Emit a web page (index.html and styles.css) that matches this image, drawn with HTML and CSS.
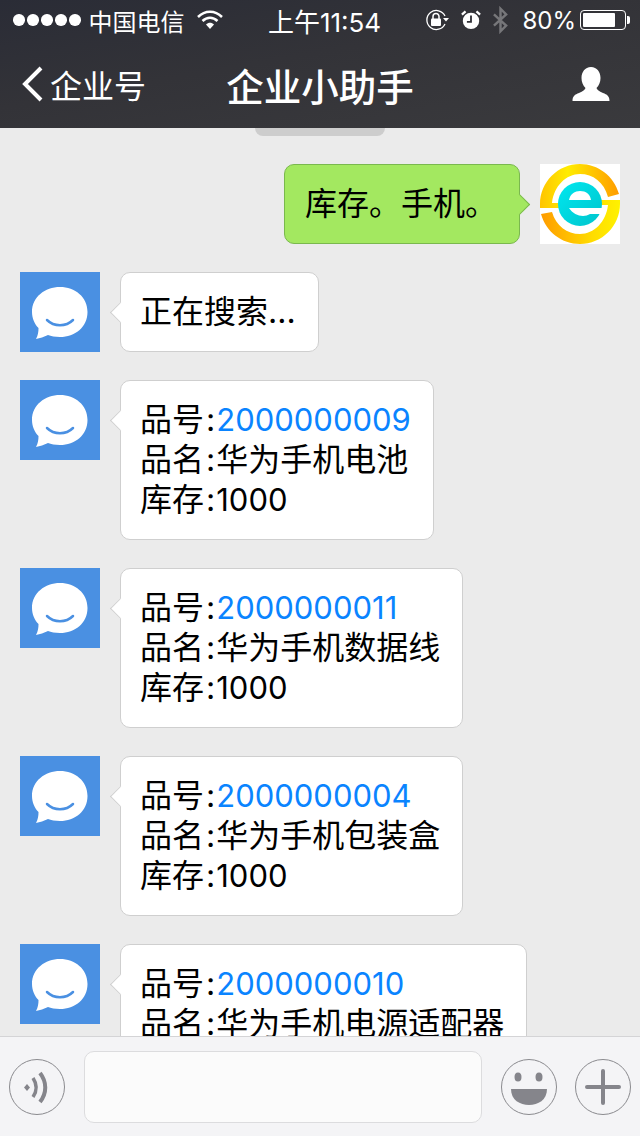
FILE: index.html
```html
<!DOCTYPE html>
<html lang="zh-CN">
<head>
<meta charset="utf-8">
<title>企业小助手</title>
<link rel="stylesheet" href="styles.css">
</head>
<body>
<svg class="defs" aria-hidden="true">
  <symbol id="bot" viewBox="0 0 80 80">
    <rect width="80" height="80" fill="#4a90e2"/>
    <path d="M40 15C55 15 67.500 25 67.500 40C67.500 55 55 65 40 65C35 65 31 64 28 63C24 65 20 66 16 67C18 63 18.500 60 18.500 56C14.500 52 12 46 12 40C12 25 25 15 40 15Z" fill="#fff"/>
    <path d="M27 48C34 55 46 55 53 48" fill="none" stroke="#4a90e2" stroke-width="2.500" stroke-linecap="round"/>
  </symbol>
</svg>
<div class="screen">
  <header class="top">
    <div class="status">
      <div class="status-side">
        <span class="dots"><i></i><i></i><i></i><i></i><i></i></span>
        <span class="carrier">中国电信</span>
        <svg class="wifi" width="26" height="20" viewBox="0 0 26 20"><path d="M1 7C8 0 18 0 25 7" fill="none" stroke="#fff" stroke-width="2.500"/><path d="M5.500 11C10 6.500 16 6.500 20.500 11" fill="none" stroke="#fff" stroke-width="2.500"/><path d="M9 14.500C11.500 12 14.500 12 17 14.500L13 19Z" fill="#fff"/></svg>
      </div>
      <div class="clock">上午11:54</div>
      <div class="status-side status-right">
        <svg class="ico" width="24" height="22" viewBox="0 0 24 22"><path d="M20 7A9.500 9.500 0 1 0 20 15" fill="none" stroke="#fff" stroke-width="1.300"/><path d="M18 9H24L21 12.500Z" fill="#fff"/><rect x="6" y="9.500" width="10" height="7.500" rx="1" fill="#fff"/><path d="M8 10V7.500A3 3 0 0 1 14 7.500V10" fill="none" stroke="#fff" stroke-width="1.500"/></svg>
        <svg class="ico" width="20" height="22" viewBox="0 0 22 22"><circle cx="11" cy="12" r="9" fill="#fff"/><path d="M11 6V13H6.500" fill="none" stroke="#303036" stroke-width="2"/><path d="M1 5L5 1.500M21 5L17 1.500" stroke="#fff" stroke-width="2.500"/></svg>
        <svg class="ico ico-bt" width="15" height="28" viewBox="0 0 16 28"><path d="M1 8L14 20L8 26V2L14 8L1 20" fill="none" stroke="#77777a" stroke-width="2.600"/></svg>
        <span class="percent">80%</span>
        <span class="battery"><span class="battery-level"></span></span>
      </div>
    </div>
    <nav class="nav">
      <div class="nav-back">
        <svg width="24" height="36" viewBox="0 0 24 36"><path d="M21 2L5 18L21 34" fill="none" stroke="#fff" stroke-width="4"/></svg>
        <span>企业号</span>
      </div>
      <div class="nav-title">企业小助手</div>
      <div class="nav-user">
        <svg width="38" height="36" viewBox="0 0 38 36"><path d="M19 1C25 1 28.500 6 28.500 12C28.500 16 27 19.500 24.500 22C25 24 27 25 31 27C35 28.500 37.500 30 37.500 35H0.500C0.500 30 3 28.500 7 27C11 25 13 24 13.500 22C11 19.500 9.500 16 9.500 12C9.500 6 13 1 19 1Z" fill="#fff"/></svg>
      </div>
    </nav>
  </header>

  <main class="chat">
    <div class="pull"></div>
    <div class="msg msg-out">
      <div class="bubble bubble-out">库存。手机。</div>
      <svg class="avatar" viewBox="0 0 80 80">
        <defs>
          <linearGradient id="g1" x1="0" y1="0" x2="1" y2="0"><stop offset="0" stop-color="#ffc400"/><stop offset="0.350" stop-color="#ffec00"/><stop offset="1" stop-color="#ff9c00"/></linearGradient>
          <linearGradient id="g2" x1="0" y1="0" x2="1" y2="0"><stop offset="0" stop-color="#ff9c00"/><stop offset="0.650" stop-color="#ffdc00"/><stop offset="1" stop-color="#fff200"/></linearGradient>
          <linearGradient id="g3" x1="0" y1="0" x2="1" y2="1"><stop offset="0" stop-color="#00e8f0"/><stop offset="1" stop-color="#00c4cc"/></linearGradient>
        </defs>
        <rect width="80" height="80" fill="#fff"/>
        <path d="M0 44H20V39H12C14 22 26 10 40 10C53 10 64 18 68 33L79 30C74 12 58 0 40 0C18 0 0 18 0 40Z" fill="url(#g1)"/>
        <path d="M80 36H60V41H68C66 58 54 70 40 70C27 70 16 62 12 48L1 50C6 68 22 80 40 80C62 80 80 62 80 40Z" fill="url(#g2)"/>
        <circle cx="40" cy="40" r="22" fill="url(#g3)"/>
        <path d="M29 36C30 30 35 27 40 27C46 27 50 30 51 36Z" fill="#fff"/>
        <path d="M29 44H64V50H50C44 54 34 52 29 44Z" fill="#fff"/>
      </svg>
    </div>

    <div class="msg">
      <svg class="avatar"><use href="#bot"/></svg>
      <div class="bubble">正在搜索...</div>
    </div>

    <div class="msg">
      <svg class="avatar"><use href="#bot"/></svg>
      <div class="bubble">品号<span class="sep">:</span><a class="num code">2000000009</a><br>品名<span class="sep">:</span>华为手机电池<br>库存<span class="sep">:</span><span class="num">1000</span></div>
    </div>

    <div class="msg">
      <svg class="avatar"><use href="#bot"/></svg>
      <div class="bubble">品号<span class="sep">:</span><a class="num code">2000000011</a><br>品名<span class="sep">:</span>华为手机数据线<br>库存<span class="sep">:</span><span class="num">1000</span></div>
    </div>

    <div class="msg">
      <svg class="avatar"><use href="#bot"/></svg>
      <div class="bubble">品号<span class="sep">:</span><a class="num code">2000000004</a><br>品名<span class="sep">:</span>华为手机包装盒<br>库存<span class="sep">:</span><span class="num">1000</span></div>
    </div>

    <div class="msg">
      <svg class="avatar"><use href="#bot"/></svg>
      <div class="bubble">品号<span class="sep">:</span><a class="num code">2000000010</a><br>品名<span class="sep">:</span>华为手机电源适配器<br>库存<span class="sep">:</span><span class="num">1000</span></div>
    </div>
  </main>

  <footer class="bar">
    <svg class="round" viewBox="0 0 56 56"><circle cx="28" cy="28" r="27.500" fill="none" stroke="#8a8a8e"/><path d="M18 25L21 28.500L18 32L15 28.500Z" fill="#85858b"/><path d="M24 19C28 25 28 32 24 38" fill="none" stroke="#85858b" stroke-width="3.500"/><path d="M31 14C38 23 38 34 31 43" fill="none" stroke="#85858b" stroke-width="4"/></svg>
    <div class="field"></div>
    <svg class="round" viewBox="0 0 56 56"><circle cx="28" cy="28" r="27.500" fill="none" stroke="#8a8a8e"/><ellipse cx="17" cy="18" rx="3.500" ry="4.500" fill="#85858b"/><ellipse cx="38" cy="18" rx="3.500" ry="4.500" fill="#85858b"/><path d="M10 30H46C46 41 37 46 28 46C19 46 10 41 10 30Z" fill="#85858b"/></svg>
    <svg class="round" viewBox="0 0 56 56"><circle cx="28" cy="28" r="27.500" fill="none" stroke="#8a8a8e"/><path d="M28 12V44M12 28H44" stroke="#85858b" stroke-width="4" stroke-linecap="round"/></svg>
  </footer>
</div>
</body>
</html>
```
FILE: styles.css
```css
* { box-sizing: border-box; }
html, body { margin: 0; padding: 0; }
body {
  font-family: Inter, "Noto Sans CJK SC", "Noto Sans", sans-serif;
  color: #000;
  background: #ebebeb;
}
.defs { width: 0; height: 0; display: block; overflow: hidden; }
.screen {
  width: 640px;
  height: 1136px;
  display: flex;
  flex-direction: column;
  overflow: hidden;
}
.top {
  flex: none;
  height: 128px;
  color: #fff;
  background: linear-gradient(170deg, #2a2c36 0%, #333338 45%, #3a3a3d 100%);
}
.status {
  height: 40px;
  padding: 0 14px 0 13px;
  display: flex;
  align-items: center;
  justify-content: space-between;
  font-size: 24px;
}
.status-side { width: 236px; display: flex; align-items: center; }
.status-right { justify-content: flex-end; }
.dots { display: flex; gap: 2.500px; margin-right: 8px; }
.dots i { width: 11.500px; height: 11.500px; border-radius: 50%; background: #fff; }
.carrier { font-size: 24px; }
.wifi { margin-left: 12px; }
.clock { font-size: 26px; margin-left: 10px; }
.ico { margin-right: 12px; }
.ico-bt { margin-right: 14px; }
.percent { font-size: 24px; margin-right: 4px; }
.battery {
  width: 46px;
  height: 20px;
  padding: 2px;
  border: 1px solid #fff;
  border-radius: 4px;
  position: relative;
  display: block;
}
.battery::after {
  content: "";
  position: absolute;
  right: -5px;
  top: 5px;
  width: 3px;
  height: 8px;
  background: #fff;
  border-radius: 0 2px 2px 0;
}
.battery-level { display: block; width: 80%; height: 100%; background: #fff; border-radius: 1px; }
.nav {
  height: 88px;
  padding: 0 20px;
  display: grid;
  grid-template-columns: 1fr auto 1fr;
  align-items: center;
}
.nav-back { display: flex; align-items: center; gap: 6px; font-size: 32px; }
.nav-back svg { display: block; }
.nav-title { font-size: 37.500px; font-weight: 500; white-space: nowrap; }
.nav-user { display: flex; justify-content: flex-end; padding-right: 10px; }
.nav-user svg { display: block; }
.chat {
  flex: 1;
  min-height: 0;
  position: relative;
  overflow: hidden;
  padding: 36px 20px 0;
  display: flex;
  flex-direction: column;
  gap: 28px;
}
.pull {
  position: absolute;
  left: 255px;
  top: 0;
  width: 130px;
  height: 8px;
  background: #cdcdcd;
  border-radius: 0 0 8px 8px;
}
.msg { flex: none; display: flex; align-items: flex-start; gap: 20px; }
.msg-out { justify-content: flex-end; }
.avatar { flex: none; width: 80px; height: 80px; display: block; }
.bubble {
  position: relative;
  padding: 19px 22px 19px 19px;
  font-size: 32px;
  line-height: 40px;
  background: #fff;
  border: 1px solid #cfcfcf;
  border-radius: 10px;
  white-space: nowrap;
}
.bubble::before {
  content: "";
  position: absolute;
  left: -8px;
  top: 32px;
  width: 14px;
  height: 14px;
  background: inherit;
  border-left: 1px solid #cfcfcf;
  border-bottom: 1px solid #cfcfcf;
  transform: rotate(45deg);
}
.bubble-out { background: #a3e860; border-color: #7ab84e; padding-left: 20px; padding-right: 22px; }
.bubble-out::before { left: auto; right: -8px; border: 0; border-right: 1px solid #7ab84e; border-top: 1px solid #7ab84e; }
.sep { margin: 0 1px 0 2px; }
.num { font-size: 31px; }
.code { color: #0a84ff; }
.bar {
  flex: none;
  height: 100px;
  padding: 0 9px;
  display: flex;
  align-items: center;
  background: #f4f4f6;
  border-top: 1px solid #d4d4d6;
}
.round { flex: none; width: 56px; height: 56px; display: block; }
.field {
  width: 398px;
  height: 72px;
  margin: 0 19px;
  background: #fbfbfb;
  border: 1px solid #dcdcde;
  border-radius: 10px;
}
.field + .round + .round { margin-left: 18px; }
```
